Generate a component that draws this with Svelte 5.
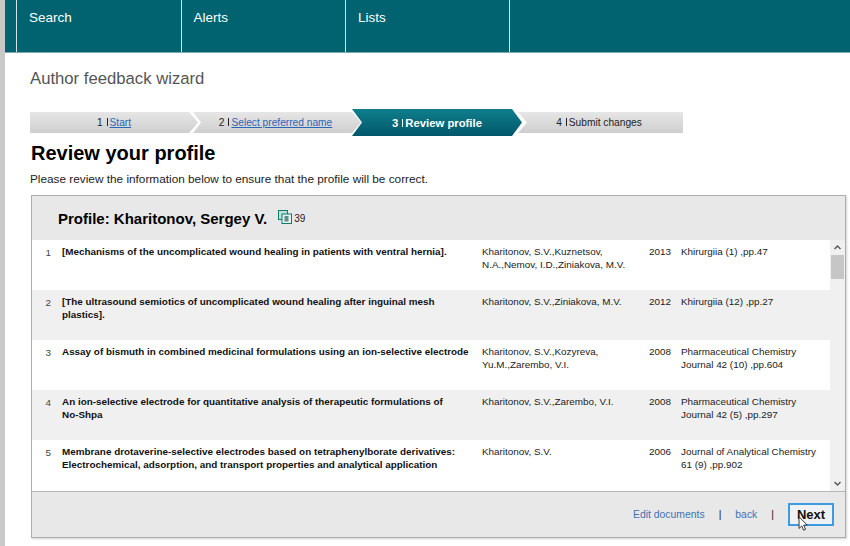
<script>
  const tabs = ['Search', 'Alerts', 'Lists'];
  const rows = [
    { n: 1, title: '[Mechanisms of the uncomplicated wound healing in patients with ventral hernia].', authors: 'Kharitonov, S.V.,Kuznetsov, N.A.,Nemov, I.D.,Ziniakova, M.V.', year: 2013, source: 'Khirurgiia (1) ,pp.47' },
    { n: 2, title: '[The ultrasound semiotics of uncomplicated wound healing after inguinal mesh plastics].', authors: 'Kharitonov, S.V.,Ziniakova, M.V.', year: 2012, source: 'Khirurgiia (12) ,pp.27' },
    { n: 3, title: 'Assay of bismuth in combined medicinal formulations using an ion-selective electrode', authors: 'Kharitonov, S.V.,Kozyreva, Yu.M.,Zarembo, V.I.', year: 2008, source: 'Pharmaceutical Chemistry Journal 42 (10) ,pp.604' },
    { n: 4, title: 'An ion-selective electrode for quantitative analysis of therapeutic formulations of\nNo-Shpa', authors: 'Kharitonov, S.V.,Zarembo, V.I.', year: 2008, source: 'Pharmaceutical Chemistry Journal 42 (5) ,pp.297' },
    { n: 5, title: 'Membrane drotaverine-selective electrodes based on tetraphenylborate derivatives: Electrochemical, adsorption, and transport properties and analytical application', authors: 'Kharitonov, S.V.', year: 2006, source: 'Journal of Analytical Chemistry 61 (9) ,pp.902' }
  ];
</script>

<div class="page">
  <span class="edge-mark"></span>
  <nav class="topbar">
    {#each tabs as tab}
      <div class="tab">{tab}</div>
    {/each}
  </nav>

  <main class="content">
    <h1 class="wizard-title">Author feedback wizard</h1>

    <ol class="steps">
      <li class="step first"><span class="num">1</span><a href="#start">Start</a></li>
      <li class="step second"><span class="num">2</span><a href="#name">Select preferred name</a></li>
      <li class="step active"><span class="num">3</span><span>Review profile</span></li>
      <li class="step last"><span class="num">4</span><span>Submit changes</span></li>
    </ol>

    <h2 class="heading">Review your profile</h2>
    <p class="intro">Please review the information below to ensure that the profile will be correct.</p>

    <section class="panel">
      <header class="panel-head">
        <span class="profile-name">Profile: Kharitonov, Sergey V.</span>
        <svg class="doc-icon" width="14" height="14" viewBox="0 0 14 14" aria-hidden="true">
          <rect x="0.5" y="0.5" width="9" height="9" fill="#bfe0da" stroke="#0a7d6c"/>
          <rect x="4" y="4" width="9.5" height="9.5" fill="#e6f2ef" stroke="#0a7d6c"/>
          <rect x="6.5" y="6" width="4" height="5.5" fill="#5f8f8a"/>
        </svg>
        <span class="count">39</span>
      </header>

      <div class="list-wrap">
        <div class="list">
          {#each rows as r}
            <div class="row">
              <div class="n">{r.n}</div>
              <div class="title">{r.title}</div>
              <div class="authors">{r.authors}</div>
              <div class="year">{r.year}</div>
              <div class="source">{r.source}</div>
            </div>
          {/each}
        </div>
        <div class="scrollbar">
          <svg width="15" height="15" viewBox="0 0 15 15" aria-hidden="true"><path d="M4.5 9 L7.5 6 L10.5 9" fill="none" stroke="#555" stroke-width="1.4"/></svg>
          <div class="track"><div class="thumb"></div></div>
          <svg width="15" height="15" viewBox="0 0 15 15" aria-hidden="true"><path d="M4.5 6 L7.5 9 L10.5 6" fill="none" stroke="#555" stroke-width="1.4"/></svg>
        </div>
      </div>

      <footer class="panel-foot">
        <a class="foot-link" href="#edit">Edit documents</a>
        <span class="sep">|</span>
        <a class="foot-link" href="#back">back</a>
        <span class="sep">|</span>
        <button class="next">Next
          <svg class="cursor" width="11" height="16" viewBox="0 0 12 18" aria-hidden="true">
            <path d="M1 1 L1 14 L4 11.2 L6.2 16 L8.4 15 L6.2 10.4 L10.2 10.2 Z" fill="#fff" stroke="#222" stroke-width="1"/>
          </svg>
        </button>
      </footer>
    </section>
  </main>
</div>

<style>
  :global(body) {
    margin: 0;
    background: #fff;
    font-family: "Liberation Sans", Arial, sans-serif;
  }
  .page {
    position: relative;
    width: 850px;
    height: 546px;
    overflow: hidden;
    box-sizing: border-box;
    border-left: 5px solid #c9c9c9;
  }
  .edge-mark {
    position: absolute;
    left: -3px;
    top: 408px;
    width: 1px;
    height: 7px;
    background: #666;
  }
  .topbar {
    display: flex;
    height: 53px;
    margin-left: -5px;
    padding-left: 16px;
    background: #00636f;
    border-bottom: 1px solid #7fa9ae;
    box-sizing: border-box;
  }
  .tab {
    width: 164.5px;
    box-sizing: border-box;
    border-left: 1px solid #d4e3e5;
    padding-top: 10px;
    padding-left: 12px;
    color: #fff;
    font-size: 13.5px;
    line-height: 16px;
  }
  .tab:last-child {
    border-right: 1px solid #d4e3e5;
  }
  .content {
    padding-left: 25px;
  }
  .wizard-title {
    margin: 16px 0 0;
    font-size: 16.7px;
    line-height: 19px;
    font-weight: 400;
    color: #555;
  }
  .steps {
    display: flex;
    align-items: center;
    list-style: none;
    margin: 21px 0 0;
    padding: 0;
    height: 27px;
    font-size: 10.2px;
  }
  .step {
    display: flex;
    justify-content: center;
    align-items: center;
    height: 21px;
    box-sizing: border-box;
    background: linear-gradient(#e6e6e6, #cfcfcf);
    color: #222;
    flex: none;
  }
  .num::after {
    content: "";
    display: inline-block;
    width: 1px;
    height: 8px;
    margin: 0 2px 0 4px;
    background: currentColor;
  }
  .first {
    width: 168px;
    clip-path: polygon(0 0, 159px 0, 100% 50%, 159px 100%, 0 100%);
  }
  .second {
    width: 168px;
    margin-left: -5px;
    padding-right: 3px;
    clip-path: polygon(0 0, 159px 0, 100% 50%, 159px 100%, 0 100%, 8px 50%);
  }
  .active {
    width: 170px;
    height: 27px;
    margin-left: -9px;
    background: linear-gradient(#0f7f8c, #00566a);
    color: #fff;
    font-weight: 700;
    font-size: 11.3px;
    clip-path: polygon(0 0, 160px 0, 100% 50%, 160px 100%, 0 100%, 10px 50%);
  }
  .last {
    width: 165px;
    margin-left: -4px;
    padding-right: 3px;
    clip-path: polygon(0 0, 100% 0, 100% 100%, 0 100%, 9px 50%);
  }
  .step a {
    color: #2a66b5;
  }
  .heading {
    margin: 4px 0 0 1px;
    font-size: 20px;
    line-height: 26px;
    font-weight: 700;
    color: #000;
  }
  .intro {
    margin: 6px 0 0;
    font-size: 11.8px;
    line-height: 14px;
    color: #222;
  }
  .panel {
    width: 815px;
    height: 343px;
    margin: 9px 0 0 1px;
    box-sizing: border-box;
    border: 1px solid #adadad;
    background: #e8e8e8;
    box-shadow: 1px 1px 2px rgba(0, 0, 0, 0.18);
    display: flex;
    flex-direction: column;
  }
  .panel-head {
    height: 44px;
    flex: none;
    display: flex;
    align-items: center;
    padding-left: 26px;
    box-sizing: border-box;
  }
  .profile-name {
    font-size: 15px;
    font-weight: 700;
    color: #000;
  }
  .doc-icon {
    margin-left: 11px;
    margin-top: -3px;
  }
  .count {
    margin-left: 2px;
    font-size: 10px;
    color: #222;
    margin-top: 1px;
  }
  .list-wrap {
    height: 251px;
    flex: none;
    display: flex;
    background: #fff;
    border-bottom: 1px solid #b5b5b5;
    box-sizing: content-box;
  }
  .list {
    flex: 1;
    min-width: 0;
  }
  .row {
    height: 50px;
    display: grid;
    grid-template-columns: 30px 420px 167px 33px 1fr;
    padding-top: 5px;
    box-sizing: border-box;
    font-size: 9.9px;
    line-height: 13px;
    color: #222;
  }
  .row:nth-child(even) {
    background: #f0f0f0;
  }
  .n {
    text-align: right;
    padding-right: 11px;
    padding-top: 1px;
    color: #444;
  }
  .title {
    font-weight: 700;
    color: #111;
    padding-right: 8px;
    white-space: pre-line;
  }
  .authors {
    padding-right: 20px;
  }
  .source {
    margin-left: -1px;
    padding-right: 4px;
  }
  .scrollbar {
    width: 15px;
    flex: none;
    display: flex;
    flex-direction: column;
    background: #f0f0f0;
  }
  .scrollbar svg {
    flex: none;
    display: block;
  }
  .track {
    flex: 1;
  }
  .thumb {
    width: 13px;
    height: 24px;
    margin: 0 1px;
    background: #c6c6c6;
  }
  .panel-foot {
    flex: 1;
    display: flex;
    align-items: center;
    justify-content: flex-end;
    padding-right: 11px;
    font-size: 10.4px;
    box-sizing: border-box;
  }
  .foot-link {
    color: #3f73b5;
    text-decoration: none;
  }
  .sep {
    color: #222;
    margin: 0 14px;
  }
  .next {
    position: relative;
    width: 46px;
    height: 23px;
    box-sizing: border-box;
    padding: 0;
    border: 2px solid #3d9be0;
    background: #eef2f5;
    font: 700 13px "Liberation Sans", Arial, sans-serif;
    color: #111;
  }
  .cursor {
    position: absolute;
    left: 8px;
    top: 11px;
  }
</style>
